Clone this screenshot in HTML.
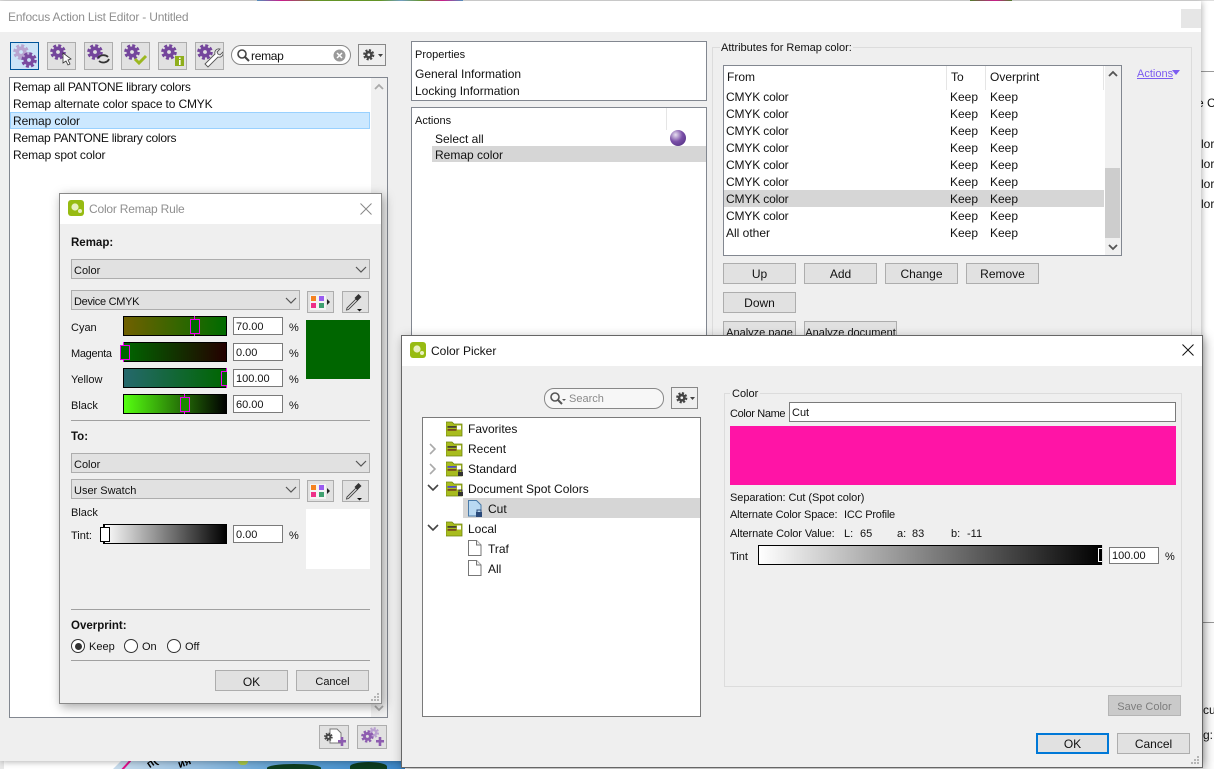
<!DOCTYPE html>
<html><head><meta charset="utf-8"><title>Enfocus Action List Editor</title>
<style>
html,body{margin:0;padding:0;width:1214px;height:769px;overflow:hidden;background:#fff}
body{position:relative;font:12px/16px "Liberation Sans",sans-serif;color:#111}
div,span,svg{position:absolute;box-sizing:border-box}
.t{white-space:nowrap;height:16px}
.s{font-size:11px}
.t.s{margin-top:1px}
.b{font-weight:bold}
.t.b.s{font-size:11.5px}
.btn{background:#e1e1e1;border:1px solid #adadad;text-align:center;line-height:20px;white-space:nowrap}
.btn.s,.btn.l{line-height:22px}
.combo{background:#e1e1e1;border:1px solid #adadad;padding-left:2px;line-height:22px;font-size:11px}
.inp{background:#fff;border:1px solid #7a7a7a;padding-left:2px;line-height:19px;white-space:nowrap;font-size:11px}
.ibtn{background:#e1e1e1;border:1px solid #adadad}
.box{background:#fff;border:1px solid #828790}
.sl{border:1px solid #000}
.h{border:1px solid #f000f0;width:10px;height:15px}
.st{background:#f000f0;width:1px;height:20px}
.dv{height:1px;background:#a0a0a0;left:71px;width:299px}
.rd{width:14px;height:14px;border-radius:50%;border:1px solid #333;background:#fff}
.dlg{background:#efefef;border:1px solid #8a8a8a;box-shadow:2px 3px 10px rgba(0,0,0,.35)}
.chev{fill:none;stroke:#555;stroke-width:1.2}
</style></head><body>
<svg width="0" height="0" style="left:0;top:0">
<defs>
<g id="gear"><circle cx="8" cy="8" r="6.3" fill="none" stroke="currentColor" stroke-width="3" stroke-dasharray="2.900 2.050"/><circle cx="8" cy="8" r="3.700" fill="none" stroke="currentColor" stroke-width="3.600"/></g>
<g id="logo"><rect x="0" y="0" width="16" height="16" rx="3" fill="#97bb12"/><circle cx="7" cy="7" r="3.6" fill="#e8f0c0"/><circle cx="12" cy="11" r="2" fill="#e8f0c0"/></g>
<g id="dd"><path d="M2 5l5 5 5-5" class="chev"/></g>
<g id="pal"><rect x="8" y="4" width="16" height="15" fill="#f4f4f4"/><rect x="9" y="5" width="5" height="5" fill="#f58220"/><rect x="17" y="5" width="5" height="5" fill="#9a5cf0"/><rect x="9" y="12" width="5" height="5" fill="#ee3088"/><rect x="17" y="12" width="5" height="5" fill="#3fa070"/><path d="M25 8l3 3-3 3z" fill="#222"/></g>
<g id="drop"><path d="M5 18l9-9 1.500 1.500-9 9-2 .5z" fill="#e8e8e8" stroke="#444" stroke-width=".9"/><path d="M12.500 8l4-4 3 3-4 4z" fill="#333"/><path d="M15 19h5l-2.500 2.500z" fill="#111"/></g>
<g id="fold"><path d="M0 2h6l2 2h8v12H0z" fill="#a8bc1e" stroke="#6f8410" stroke-width=".8"/><rect x="1.500" y="6" width="9" height="1.800" fill="#443"/><rect x="1.500" y="9" width="9" height="1.800" fill="#7a4a20"/><rect x="11" y="5.500" width="4" height="4" fill="#fff"/></g>
<g id="foldl"><path d="M0 2h6l2 2h8v12H0z" fill="#a8bc1e" stroke="#6f8410" stroke-width=".8"/><rect x="1.500" y="6" width="9" height="1.800" fill="#5050c0"/><rect x="1.500" y="9" width="9" height="1.800" fill="#7a4a20"/><rect x="11" y="5.500" width="4" height="4" fill="#fff"/><rect x="12" y="12" width="5" height="4" fill="#333"/><path d="M13 12v-2h3v2" fill="none" stroke="#333"/></g>
<g id="doc"><path d="M.5.500h8l4.500 4.500v10.500H.5z" fill="#fff" stroke="#777"/><path d="M8.500.500v4.500h4.500" fill="#eee" stroke="#777"/></g>
</defs></svg>

<!-- background behind windows -->
<div style="left:0;top:0;width:1214px;height:1px;background:#ddd"></div>
<div style="left:257px;top:0;width:206px;height:2px;background:linear-gradient(90deg,#5a9fd0,#e0209a 12%,#6ea52a 30%,#6ea52a 60%,#7fb0d8 70%,#6ea52a 80%,#e0209a 90%,#5a9fd0)"></div>
<div style="left:970px;top:0;width:42px;height:2px;background:linear-gradient(90deg,#5a8a30,#e0209a 60%,#5a8a30)"></div>
<div style="left:1201px;top:71px;width:13px;height:1px;background:#999"></div>
<div style="left:1201px;top:622px;width:13px;height:1px;background:#999"></div>
<span class="t" style="left:1197px;top:95px">e C</span>
<span class="t" style="left:1201px;top:136px">lor:</span>
<span class="t" style="left:1201px;top:156px">lor:</span>
<span class="t" style="left:1201px;top:176px">lor:</span>
<span class="t" style="left:1201px;top:196px">lor:</span>
<span class="t" style="left:1203px;top:702px">cu</span>
<span class="t" style="left:1203px;top:727px">g:</span>
<div style="left:0;top:761px;width:4px;height:8px;background:#e8e8e8"></div>
<div style="left:113px;top:761px;width:292px;height:8px;background:linear-gradient(90deg,#c8dcec,#9cc2e2 25%,#5d9fd2 60%,#3a86c8);clip-path:polygon(8px 0,100% 0,100% 100%,0 100%)"></div>
<div style="left:125px;top:759px;width:2px;height:13px;background:#e0108a;transform:rotate(42deg)"></div>
<span class="t b" style="left:147px;top:755px;font-size:11px;color:#000;transform:rotate(-35deg)">п(</span>
<span class="t b" style="left:178px;top:755px;font-size:11px;color:#000;transform:rotate(-20deg)">ия</span>
<div style="left:267px;top:764px;width:54px;height:8px;background:#0d3d1e;border-radius:50% 50% 0 0"></div>
<div style="left:350px;top:762px;width:37px;height:9px;background:#0d3d1e;border-radius:50% 50% 0 0"></div>
<div style="left:238px;top:761px;width:10px;height:4px;background:#a9c84a;border-radius:0 0 5px 5px"></div>

<!-- main window -->
<div style="left:0;top:1px;width:1201px;height:760px;background:#efefef;box-shadow:1px 1px 6px rgba(0,0,0,.3)"></div>
<div style="left:0;top:1px;width:1201px;height:31px;background:#fff"></div>
<span class="t" style="left:8px;top:9px;color:#8f8f8f;letter-spacing:-.19px">Enfocus Action List Editor - Untitled</span>
<div style="left:1181px;top:9px;width:20px;height:19px;background:#e6e6e6"></div>

<!-- toolbar -->
<div class="ibtn" style="left:10px;top:42px;width:29px;height:28px;background:#cce4f7;border:1px solid #005499"></div>
<svg style="left:13px;top:44px;color:#b8a4cf" width="25" height="25"><use href="#gear" x="0" y="0"/><g style="color:#7a4ba0"><use href="#gear" x="8" y="8"/></g></svg>
<div class="ibtn" style="left:47px;top:42px;width:29px;height:28px"></div>
<svg style="left:50px;top:44px;color:#74459c" width="25" height="24"><use href="#gear"/><path d="M13 9l0 10 3-2 2 4 2-1-2-4 3-1z" fill="#fff" stroke="#333" stroke-width=".8"/></svg>
<div class="ibtn" style="left:84px;top:42px;width:29px;height:28px"></div>
<svg style="left:87px;top:44px;color:#74459c" width="25" height="24"><use href="#gear"/><path d="M11 14a6 5 0 0 1 10-1M22 15a6 5 0 0 1-10 2" fill="none" stroke="#333" stroke-width="1.800"/></svg>
<div class="ibtn" style="left:121px;top:42px;width:29px;height:28px"></div>
<svg style="left:124px;top:44px;color:#74459c" width="25" height="24"><use href="#gear"/><path d="M11 15l4 4 7-7" fill="none" stroke="#9cb820" stroke-width="3"/></svg>
<div class="ibtn" style="left:158px;top:42px;width:29px;height:28px"></div>
<svg style="left:161px;top:44px;color:#74459c" width="25" height="24"><use href="#gear"/><rect x="14" y="12" width="9" height="10" fill="#8fae1c"/><rect x="18" y="16" width="1.600" height="5" fill="#fff"/><rect x="18" y="13.500" width="1.600" height="1.500" fill="#fff"/></svg>
<div class="ibtn" style="left:195px;top:42px;width:29px;height:28px"></div>
<svg style="left:197px;top:44px;color:#74459c" width="26" height="24"><use href="#gear"/><path d="M8 20l10-10c-1-3 2-6 5-5l-3 3 1 2 2 1 3-3c1 3-2 6-5 5L11 23z" fill="#fff" stroke="#555" stroke-width=".9"/></svg>

<div style="left:231px;top:45px;width:120px;height:20px;background:#fff;border:1px solid #888;border-radius:10px"></div>
<svg style="left:236px;top:48px" width="14" height="15"><circle cx="6" cy="6" r="4" fill="none" stroke="#444" stroke-width="1.600"/><path d="M9 9l4 4" stroke="#444" stroke-width="2"/></svg>
<span class="t" style="left:251px;top:48px;letter-spacing:-.3px">remap</span>
<svg style="left:333px;top:49px" width="13" height="13"><circle cx="6.500" cy="6.500" r="6" fill="#9a9a9a"/><path d="M4 4l5 5M9 4l-5 5" stroke="#fff" stroke-width="1.500"/></svg>
<div class="ibtn" style="left:358px;top:44px;width:28px;height:22px;background:#efefef;border-color:#888"></div>
<svg style="left:363px;top:49px;color:#444" width="22" height="14"><g transform="scale(.72)"><use href="#gear"/></g><path d="M15 5h5l-2.500 3z" fill="#444"/></svg>

<!-- action list -->
<div class="box" style="left:9px;top:77px;width:379px;height:641px"></div>
<div style="left:371px;top:78px;width:16px;height:639px;background:#f0f0f0"></div>
<svg style="left:373px;top:82px" width="12" height="10"><path d="M2 7l4-4 4 4" fill="none" stroke="#aaa" stroke-width="1.800"/></svg>
<svg style="left:373px;top:703px" width="12" height="10"><path d="M2 3l4 4 4-4" fill="none" stroke="#aaa" stroke-width="1.800"/></svg>
<div style="left:10px;top:112px;width:360px;height:17px;background:#cce8ff;border:1px solid #99d1ff"></div>
<span class="t" style="left:13px;top:79px;letter-spacing:-.25px">Remap all PANTONE library colors</span>
<span class="t" style="left:13px;top:96px;letter-spacing:-.15px">Remap alternate color space to CMYK</span>
<span class="t" style="left:13px;top:113px;letter-spacing:-.1px">Remap color</span>
<span class="t" style="left:13px;top:130px;letter-spacing:-.25px">Remap PANTONE library colors</span>
<span class="t" style="left:13px;top:147px;letter-spacing:-.1px">Remap spot color</span>

<!-- bottom-left buttons -->
<div class="ibtn" style="left:319px;top:725px;width:30px;height:24px"></div>
<svg style="left:323px;top:728px;color:#444" width="24" height="19"><path d="M7 1h7l4 4v10H7z" fill="#fff" stroke="#777"/><g transform="translate(1 4.500) scale(.55)"><use href="#gear"/></g><path d="M15 12h8v2.500h-8zM17.700 9h2.600v9h-2.600z" fill="#8d5cb0"/></svg>
<div class="ibtn" style="left:357px;top:725px;width:30px;height:24px"></div>
<svg style="left:361px;top:727px;color:#8d5cb0" width="25" height="21"><g style="color:#b9a0d0" transform="translate(7 0) scale(.7)"><use href="#gear"/></g><g transform="translate(0 3) scale(.8)"><use href="#gear"/></g><path d="M15 13h8v2.500h-8zM17.700 10h2.600v9h-2.600z" fill="#8d5cb0"/></svg>

<!-- properties -->
<div class="box" style="left:411px;top:41px;width:296px;height:60px"></div>
<span class="t s" style="left:415px;top:46px">Properties</span>
<span class="t" style="left:415px;top:66px">General Information</span>
<span class="t" style="left:415px;top:83px">Locking Information</span>
<div class="box" style="left:411px;top:107px;width:296px;height:240px"></div>
<span class="t s" style="left:415px;top:112px">Actions</span>
<div style="left:666px;top:108px;width:1px;height:22px;background:#e5e5e5"></div>
<span class="t" style="left:435px;top:131px">Select all</span>
<div style="left:670px;top:130px;width:16px;height:16px;border-radius:50%;background:radial-gradient(circle at 35% 30%,#e8e0f0,#7a4fa8 45%,#4a2a7a)"></div>
<div style="left:432px;top:146px;width:274px;height:16px;background:#d6d6d6"></div>
<span class="t" style="left:435px;top:147px">Remap color</span>

<!-- attributes -->
<div style="left:712px;top:47px;width:480px;height:300px;border:1px solid #dcdcdc"></div>
<span class="t s" style="left:720px;top:39px;background:#efefef;padding:0 1px">Attributes for Remap color:</span>
<div class="box" style="left:723px;top:65px;width:399px;height:191px"></div>
<div style="left:946px;top:66px;width:1px;height:24px;background:#e5e5e5"></div>
<div style="left:985px;top:66px;width:1px;height:24px;background:#e5e5e5"></div>
<div style="left:1103px;top:66px;width:1px;height:24px;background:#e5e5e5"></div>
<span class="t" style="left:727px;top:69px">From</span><span class="t" style="left:951px;top:69px">To</span><span class="t" style="left:990px;top:69px">Overprint</span>
<div style="left:724px;top:190px;width:380px;height:17px;background:#d6d6d6"></div>
<span class="t" style="left:726px;top:89px;letter-spacing:-.15px">CMYK color</span><span class="t" style="left:950px;top:89px">Keep</span><span class="t" style="left:990px;top:89px">Keep</span>
<span class="t" style="left:726px;top:106px;letter-spacing:-.15px">CMYK color</span><span class="t" style="left:950px;top:106px">Keep</span><span class="t" style="left:990px;top:106px">Keep</span>
<span class="t" style="left:726px;top:123px;letter-spacing:-.15px">CMYK color</span><span class="t" style="left:950px;top:123px">Keep</span><span class="t" style="left:990px;top:123px">Keep</span>
<span class="t" style="left:726px;top:140px;letter-spacing:-.15px">CMYK color</span><span class="t" style="left:950px;top:140px">Keep</span><span class="t" style="left:990px;top:140px">Keep</span>
<span class="t" style="left:726px;top:157px;letter-spacing:-.15px">CMYK color</span><span class="t" style="left:950px;top:157px">Keep</span><span class="t" style="left:990px;top:157px">Keep</span>
<span class="t" style="left:726px;top:174px;letter-spacing:-.15px">CMYK color</span><span class="t" style="left:950px;top:174px">Keep</span><span class="t" style="left:990px;top:174px">Keep</span>
<span class="t" style="left:726px;top:191px;letter-spacing:-.15px">CMYK color</span><span class="t" style="left:950px;top:191px">Keep</span><span class="t" style="left:990px;top:191px">Keep</span>
<span class="t" style="left:726px;top:208px;letter-spacing:-.15px">CMYK color</span><span class="t" style="left:950px;top:208px">Keep</span><span class="t" style="left:990px;top:208px">Keep</span>
<span class="t" style="left:726px;top:225px">All other</span><span class="t" style="left:950px;top:225px">Keep</span><span class="t" style="left:990px;top:225px">Keep</span>
<div style="left:1105px;top:66px;width:16px;height:189px;background:#f0f0f0"></div>
<div style="left:1105px;top:168px;width:15px;height:70px;background:#cdcdcd"></div>
<svg style="left:1107px;top:69px" width="12" height="10"><path d="M2 7l4-4 4 4" fill="none" stroke="#555" stroke-width="1.800"/></svg>
<svg style="left:1107px;top:242px" width="12" height="10"><path d="M2 3l4 4 4-4" fill="none" stroke="#555" stroke-width="1.800"/></svg>
<span class="t s" style="left:1137px;top:65px;color:#7b5cf0;text-decoration:underline">Actions</span>
<svg style="left:1172px;top:70px" width="9" height="6"><path d="M0 0h8l-4 5z" fill="#7b5cf0"/></svg>
<div class="btn" style="left:723px;top:263px;width:73px;height:21px">Up</div>
<div class="btn" style="left:804px;top:263px;width:73px;height:21px">Add</div>
<div class="btn" style="left:885px;top:263px;width:73px;height:21px">Change</div>
<div class="btn" style="left:966px;top:263px;width:73px;height:21px">Remove</div>
<div class="btn" style="left:723px;top:292px;width:73px;height:21px">Down</div>
<div class="btn s" style="left:723px;top:321px;width:73px;height:21px">Analyze page</div>
<div class="btn s" style="left:804px;top:321px;width:93px;height:21px">Analyze document</div>

<!-- Color Remap Rule dialog -->
<div class="dlg" style="left:59px;top:193px;width:323px;height:511px"></div>
<div style="left:60px;top:194px;width:321px;height:30px;background:#fff"></div>
<svg style="left:68px;top:200px" width="16" height="16"><use href="#logo"/></svg>
<span class="t" style="left:89px;top:201px;color:#8f8f8f;letter-spacing:-.2px">Color Remap Rule</span>
<svg style="left:360px;top:203px" width="12" height="12"><path d="M.5.500l11 11M11.500.500l-11 11" stroke="#888" fill="none"/></svg>
<span class="t b s" style="left:71px;top:234px">Remap:</span>
<div class="combo" style="left:71px;top:259px;width:299px;height:20px">Color</div>
<svg style="left:354px;top:262px" width="14" height="14"><use href="#dd"/></svg>
<div class="combo" style="left:71px;top:290px;width:229px;height:20px;letter-spacing:-.3px">Device CMYK</div>
<svg style="left:284px;top:293px" width="14" height="14"><use href="#dd"/></svg>
<div class="ibtn" style="left:307px;top:291px;width:27px;height:22px"></div>
<svg style="left:307px;top:291px" width="27" height="22"><use href="#pal" x="-5" y="0"/></svg>
<div class="ibtn" style="left:342px;top:291px;width:27px;height:22px"></div>
<svg style="left:342px;top:290px" width="24" height="24"><use href="#drop"/></svg>

<span class="t s" style="left:71px;top:319px">Cyan</span>
<div class="sl" style="left:123px;top:316px;width:104px;height:20px;background:linear-gradient(90deg,#706000,#006b00)"></div>
<div class="st" style="left:194px;top:316px"></div><div class="h" style="left:190px;top:319px;background:#006b00"></div>
<div class="inp" style="left:233px;top:317px;width:50px;height:18px">70.00</div><span class="t s" style="left:289px;top:319px">%</span>

<span class="t s" style="left:71px;top:345px;letter-spacing:-.3px">Magenta</span>
<div class="sl" style="left:123px;top:342px;width:104px;height:20px;background:linear-gradient(90deg,#006600,#240000)"></div>
<div class="st" style="left:123px;top:342px;height:20px"></div><div class="h" style="left:120px;top:345px;background:#006600"></div>
<div class="inp" style="left:233px;top:343px;width:50px;height:18px">0.00</div><span class="t s" style="left:289px;top:345px">%</span>

<span class="t s" style="left:71px;top:371px">Yellow</span>
<div class="sl" style="left:123px;top:368px;width:104px;height:20px;background:linear-gradient(90deg,#25686c,#006600)"></div>
<div class="st" style="left:226px;top:368px"></div><div class="h" style="left:221px;top:371px;width:6px;background:#006600;border-right:0"></div>
<div class="inp" style="left:233px;top:369px;width:50px;height:18px">100.00</div><span class="t s" style="left:289px;top:371px">%</span>

<span class="t s" style="left:71px;top:397px">Black</span>
<div class="sl" style="left:123px;top:394px;width:104px;height:20px;background:linear-gradient(90deg,#55ff10,#000)"></div>
<div class="st" style="left:184px;top:394px"></div><div class="h" style="left:180px;top:397px;background:#1a8a00"></div>
<div class="inp" style="left:233px;top:395px;width:50px;height:18px">60.00</div><span class="t s" style="left:289px;top:397px">%</span>

<div style="left:306px;top:320px;width:64px;height:59px;background:#006600"></div>
<div class="dv" style="top:420px"></div>

<span class="t b s" style="left:71px;top:428px">To:</span>
<div class="combo" style="left:71px;top:453px;width:299px;height:20px">Color</div>
<svg style="left:354px;top:456px" width="14" height="14"><use href="#dd"/></svg>
<div class="combo" style="left:71px;top:479px;width:229px;height:20px">User Swatch</div>
<svg style="left:284px;top:482px" width="14" height="14"><use href="#dd"/></svg>
<div class="ibtn" style="left:307px;top:480px;width:27px;height:22px"></div>
<svg style="left:307px;top:480px" width="27" height="22"><use href="#pal" x="-5" y="0"/></svg>
<div class="ibtn" style="left:342px;top:480px;width:27px;height:22px"></div>
<svg style="left:342px;top:479px" width="24" height="24"><use href="#drop"/></svg>
<span class="t s" style="left:71px;top:504px">Black</span>
<span class="t s" style="left:71px;top:527px">Tint:</span>
<div class="sl" style="left:103px;top:524px;width:124px;height:20px;background:linear-gradient(90deg,#fff,#000)"></div>
<div style="left:104px;top:524px;width:1px;height:20px;background:#000"></div>
<div style="left:100px;top:527px;width:10px;height:15px;background:#fff;border:1px solid #000"></div>
<div class="inp" style="left:233px;top:525px;width:50px;height:18px">0.00</div><span class="t s" style="left:289px;top:527px">%</span>
<div style="left:306px;top:509px;width:64px;height:60px;background:#fff"></div>
<div class="dv" style="top:609px"></div>
<span class="t b s" style="left:71px;top:617px">Overprint:</span>
<div class="rd" style="left:71px;top:639px"></div><div style="left:75px;top:643px;width:7px;height:7px;border-radius:50%;background:#333"></div>
<span class="t s" style="left:89px;top:638px">Keep</span>
<div class="rd" style="left:124px;top:639px"></div><span class="t s" style="left:142px;top:638px">On</span>
<div class="rd" style="left:167px;top:639px"></div><span class="t s" style="left:185px;top:638px">Off</span>
<div class="dv" style="top:660px"></div>
<div class="btn l" style="left:215px;top:670px;width:73px;height:21px">OK</div>
<div class="btn s" style="left:296px;top:670px;width:73px;height:21px">Cancel</div>
<svg style="left:370px;top:692px" width="10" height="10"><g fill="#b5b5b5"><rect x="7" y="1" width="2" height="2"/><rect x="4" y="4" width="2" height="2"/><rect x="7" y="4" width="2" height="2"/><rect x="1" y="7" width="2" height="2"/><rect x="4" y="7" width="2" height="2"/><rect x="7" y="7" width="2" height="2"/></g></svg>

<!-- Color Picker dialog -->
<div class="dlg" style="left:401px;top:335px;width:802px;height:433px;border-color:#666"></div>
<div style="left:402px;top:336px;width:800px;height:30px;background:#fff"></div>
<svg style="left:410px;top:342px" width="16" height="16"><use href="#logo"/></svg>
<span class="t" style="left:431px;top:343px">Color Picker</span>
<svg style="left:1182px;top:344px" width="12" height="12"><path d="M.5.500l11 11M11.500.500l-11 11" stroke="#111" fill="none"/></svg>

<div style="left:544px;top:388px;width:120px;height:21px;border:1px solid #888;border-radius:10px;background:#f7f7f7"></div>
<svg style="left:549px;top:391px" width="18" height="15"><circle cx="6" cy="6" r="4" fill="none" stroke="#555" stroke-width="1.600"/><path d="M9 9l4 4" stroke="#555" stroke-width="2"/><path d="M13 8h4l-2 2z" fill="#555"/></svg>
<span class="t s" style="left:569px;top:390px;color:#8a8a8a">Search</span>
<div class="ibtn" style="left:671px;top:387px;width:27px;height:22px;background:#efefef;border-color:#888"></div>
<svg style="left:676px;top:392px;color:#444" width="22" height="14"><g transform="scale(.72)"><use href="#gear"/></g><path d="M14 5h5l-2.500 3z" fill="#444"/></svg>

<div class="box" style="left:422px;top:417px;width:279px;height:300px;border-color:#7a7a7a"></div>
<div style="left:463px;top:498px;width:237px;height:20px;background:#d6d6d6"></div>
<svg style="left:446px;top:420px" width="17" height="17"><use href="#fold"/></svg><span class="t" style="left:468px;top:421px">Favorites</span>
<svg style="left:428px;top:443px" width="10" height="12"><path d="M2 1l5 5-5 5" fill="none" stroke="#aaa" stroke-width="1.600"/></svg>
<svg style="left:446px;top:440px" width="17" height="17"><use href="#fold"/></svg><span class="t" style="left:468px;top:441px">Recent</span>
<svg style="left:428px;top:463px" width="10" height="12"><path d="M2 1l5 5-5 5" fill="none" stroke="#aaa" stroke-width="1.600"/></svg>
<svg style="left:446px;top:460px" width="17" height="17"><use href="#foldl"/></svg><span class="t" style="left:468px;top:461px">Standard</span>
<svg style="left:427px;top:483px" width="12" height="10"><path d="M1 2l5 5 5-5" fill="none" stroke="#444" stroke-width="1.600"/></svg>
<svg style="left:446px;top:480px" width="17" height="17"><use href="#foldl"/></svg><span class="t" style="left:468px;top:481px">Document Spot Colors</span>
<svg style="left:468px;top:500px" width="15" height="18"><path d="M.5.500h8l4.500 4.500v11H.5z" fill="#b9d9f2" stroke="#4a7aa8"/><rect x="8" y="12" width="6" height="5" fill="#2a4a7a"/><path d="M9 12v-2h4v2" fill="none" stroke="#2a4a7a"/></svg>
<span class="t" style="left:488px;top:501px">Cut</span>
<svg style="left:427px;top:523px" width="12" height="10"><path d="M1 2l5 5 5-5" fill="none" stroke="#444" stroke-width="1.600"/></svg>
<svg style="left:446px;top:520px" width="17" height="17"><use href="#fold"/></svg><span class="t" style="left:468px;top:521px">Local</span>
<svg style="left:468px;top:540px" width="14" height="17"><use href="#doc"/></svg><span class="t" style="left:488px;top:541px">Traf</span>
<svg style="left:468px;top:560px" width="14" height="17"><use href="#doc"/></svg><span class="t" style="left:488px;top:561px">All</span>

<div style="left:724px;top:393px;width:458px;height:294px;border:1px solid #dcdcdc"></div>
<span class="t s" style="left:730px;top:385px;background:#efefef;padding:0 2px">Color</span>
<span class="t s" style="left:730px;top:405px;letter-spacing:-.35px">Color Name</span>
<div class="inp" style="left:789px;top:402px;width:387px;height:20px;line-height:20px">Cut</div>
<div style="left:730px;top:426px;width:446px;height:59px;background:#ff14a6"></div>
<span class="t s" style="left:730px;top:489px;letter-spacing:-.07px">Separation: Cut (Spot color)</span>
<span class="t s" style="left:730px;top:506px;letter-spacing:-.15px">Alternate Color Space:</span><span class="t s" style="left:844px;top:506px;letter-spacing:-.2px">ICC Profile</span>
<span class="t s" style="left:730px;top:525px;letter-spacing:-.1px">Alternate Color Value:</span><span class="t s" style="left:844px;top:525px">L:</span><span class="t s" style="left:860px;top:525px">65</span><span class="t s" style="left:897px;top:525px">a:</span><span class="t s" style="left:912px;top:525px">83</span><span class="t s" style="left:951px;top:525px">b:</span><span class="t s" style="left:967px;top:525px">-11</span>
<span class="t s" style="left:730px;top:548px">Tint</span>
<div class="sl" style="left:758px;top:545px;width:345px;height:20px;background:linear-gradient(90deg,#fff,#000)"></div>
<div style="left:1098px;top:548px;width:5px;height:14px;background:#000;border:1px solid #fff;border-right:0"></div>
<div style="left:1102px;top:545px;width:1px;height:20px;background:#ddd"></div>
<div class="inp" style="left:1109px;top:547px;width:50px;height:17px;line-height:17px">100.00</div><span class="t s" style="left:1165px;top:548px">%</span>
<div class="btn s" style="left:1108px;top:695px;width:73px;height:21px;background:#cacaca;border-color:#b5b5b5;color:#7d7d7d">Save Color</div>
<div class="btn" style="left:1036px;top:733px;width:73px;height:21px;border:2px solid #0078d7;line-height:18px">OK</div>
<div class="btn" style="left:1117px;top:733px;width:73px;height:21px">Cancel</div>
<svg style="left:1190px;top:755px" width="10" height="10"><g fill="#b5b5b5"><rect x="7" y="1" width="2" height="2"/><rect x="4" y="4" width="2" height="2"/><rect x="7" y="4" width="2" height="2"/><rect x="1" y="7" width="2" height="2"/><rect x="4" y="7" width="2" height="2"/><rect x="7" y="7" width="2" height="2"/></g></svg>
</body></html>
